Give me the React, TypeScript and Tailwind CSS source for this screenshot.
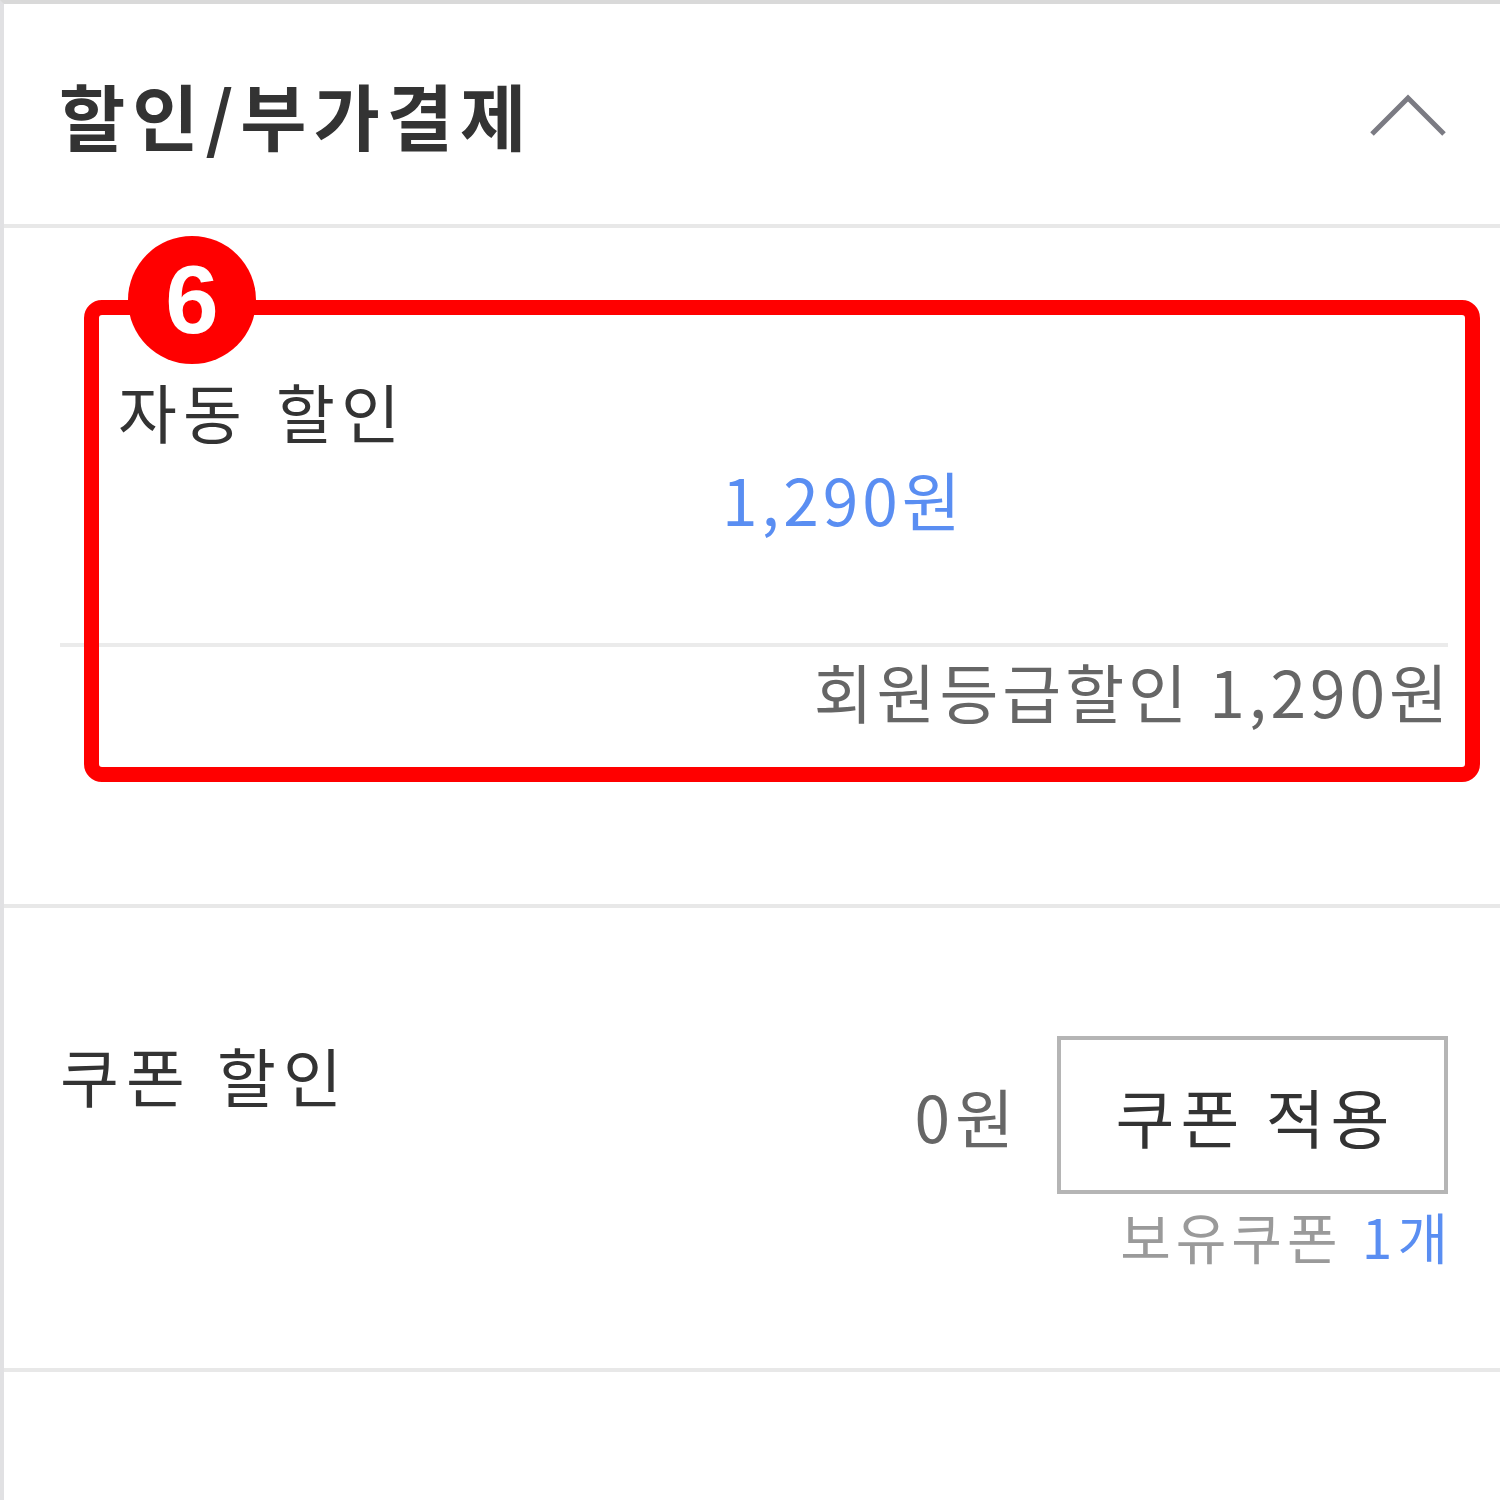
import React from "react";

const KR = { fontFamily: '"Noto Sans CJK KR", "Noto Sans", sans-serif' };

function ChevronUp() {
  return (
    <svg width="80" height="48" viewBox="0 0 80 48" fill="none">
      <polyline points="4,44 40,8 76,44" stroke="#7b7b83" strokeWidth="5" />
    </svg>
  );
}

export default function App() {
  return (
    <div
      className="relative w-[1500px] h-[1500px] bg-white border-t-4 border-l-4 border-t-[#d9d9d9] border-l-[#e1e1e3] text-[#333]"
      style={KR}
    >
      {/* header */}
      <div className="flex h-[224px] items-center justify-between border-b-4 border-[#e8e8e8] pl-[55px] pr-[52px]">
        <h2 className="text-[72px] font-bold leading-none tracking-[7px]">할인/부가결제</h2>
        <ChevronUp />
      </div>

      {/* 자동 할인 */}
      <div className="h-[680px] border-b-4 border-[#e8e8e8] pl-[56px] pr-[52px] pt-[150px]">
        <div className="pl-[58px] text-[64px] leading-none tracking-[6px] [word-spacing:8px]">자동 할인</div>
        <div className="mt-[24px] pl-[662px] text-[64px] leading-none tracking-[4px] text-[#5a8ef2]">1,290원</div>
        <div className="mt-[113px] h-[4px] bg-[#ebebeb]" />
        <div className="-mr-[4px] mt-[11px] text-right text-[64px] leading-none tracking-[4px] text-[#666]">
          회원등급할인 1,290원
        </div>
      </div>

      {/* 쿠폰 할인 */}
      <div className="flex h-[464px] items-start justify-between border-b-4 border-[#e8e8e8] pl-[56px] pr-[52px]">
        <div className="mt-[134px] text-[64px] leading-none tracking-[7px] [word-spacing:4px]">쿠폰 할인</div>
        <div className="mt-[128px] flex flex-col items-end">
          <div className="flex items-center gap-[38px]">
            <span className="text-[64px] leading-none tracking-[5px] text-[#666]">0원</span>
            <button className="flex h-[158px] w-[391px] items-center justify-center border-4 border-[#b5b5b5] bg-white pl-[6px] text-[64px] leading-none tracking-[6px] text-[#333]">
              쿠폰 적용
            </button>
          </div>
          <div className="-mr-[5px] mt-[14px] text-[55px] leading-none tracking-[5px] [word-spacing:2px] text-[#9a9a9a]">
            보유쿠폰 <span className="text-[#5a8ef2]">1개</span>
          </div>
        </div>
      </div>

      {/* annotation overlay */}
      <div className="absolute left-[80px] top-[296px] h-[482px] w-[1396px] rounded-[18px] border-[15px] border-[#ff0000]" />
      <div
        className="absolute left-[124px] top-[232px] flex h-[128px] w-[128px] items-center justify-center rounded-full bg-[#ff0000] text-[96px] font-bold leading-none text-white"
        style={{ fontFamily: '"Liberation Sans", Arial, sans-serif' }}
      >
        6
      </div>
    </div>
  );
}
